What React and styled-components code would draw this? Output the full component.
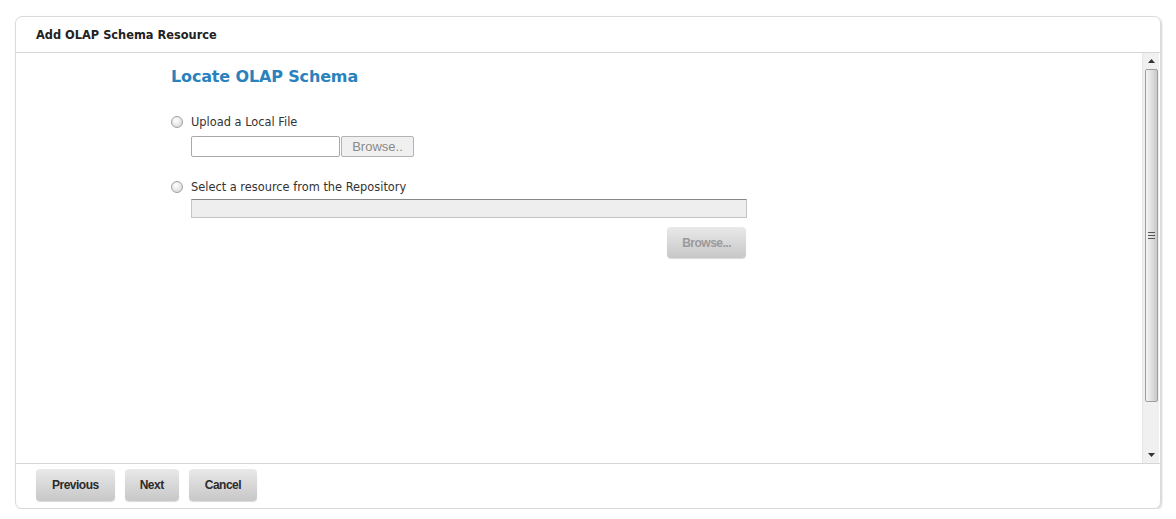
import React from "react";
import styled, { createGlobalStyle } from "styled-components";

const Global = createGlobalStyle`
  body {
    margin: 0;
    background: #fff;
    font-family: "DejaVu Sans", Verdana, sans-serif;
  }
`;

const Page = styled.div`
  padding: 16px 15px 0 15px;
`;

const Panel = styled.div`
  width: 1144px;
  height: 491px;
  border: 1px solid #dadada;
  border-radius: 7px;
  box-shadow: 1px 1px 2px rgba(0, 0, 0, 0.18);
  display: flex;
  flex-direction: column;
  overflow: hidden;
`;

const Header = styled.div`
  height: 35px;
  border-bottom: 1px solid #d6d6d6;
  display: flex;
  align-items: center;
  padding-left: 20px;
  font-size: 11.4px;
  font-weight: bold;
  color: #222;
`;

const Body = styled.div`
  flex: 1;
  display: flex;
  min-height: 0;
`;

const Content = styled.div`
  flex: 1;
  padding: 14px 0 0 155px;
`;

const Heading = styled.h2`
  margin: 0 0 29px 0;
  font-size: 16px;
  font-weight: bold;
  color: #2a82bd;
  letter-spacing: -0.15px;
`;

const Option = styled.div`
  margin-bottom: ${(p) => p.$gap}px;
`;

const RadioRow = styled.label`
  display: flex;
  align-items: center;
  gap: 8px;
  font-size: 11.4px;
  color: #333;
  height: 14px;
`;

const Radio = styled.span`
  width: 10px;
  height: 10px;
  border-radius: 50%;
  border: 1px solid #a0a0a0;
  background: radial-gradient(circle at 40% 35%, #fff 0%, #e6e6e6 55%, #cfcfcf 100%);
`;

const FileRow = styled.div`
  display: flex;
  margin: 7px 0 0 20px;
`;

const FileInput = styled.div`
  width: 147px;
  height: 19px;
  border: 1px solid #a9a9a9;
  border-radius: 2px;
  background: #fff;
`;

const SmallBrowse = styled.div`
  margin-left: 1px;
  width: 71px;
  height: 19px;
  border: 1px solid #b3b3b3;
  border-radius: 2px;
  background: #f0f0f0;
  color: #8a8a8a;
  font-family: "Liberation Sans", Arial, sans-serif;
  font-size: 13px;
  display: flex;
  align-items: center;
  justify-content: center;
`;

const RepoInput = styled.div`
  margin: 5px 0 0 20px;
  width: 554px;
  height: 17px;
  border: 1px solid #c4c4c4;
  border-top: 1px solid #888;
  background: #eeeeee;
`;

const RepoActions = styled.div`
  width: 575px;
  display: flex;
  justify-content: flex-end;
  margin-top: 9px;
`;

const GreyButton = styled.div`
  height: ${(p) => p.$h}px;
  padding: 0 ${(p) => p.$px}px;
  border-radius: 4px;
  background: linear-gradient(#e9e9e9, #c7c7c7);
  box-shadow: 0 1px 1px rgba(0, 0, 0, 0.15);
  display: flex;
  align-items: center;
  justify-content: center;
  font-family: "Liberation Sans", Arial, sans-serif;
  font-weight: bold;
  font-size: 12px;
  letter-spacing: -0.5px;
  color: ${(p) => (p.$disabled ? "#9a9a9a" : "#2b2b2b")};
`;

const Scrollbar = styled.div`
  width: 16px;
  margin-right: 1px;
  background: #f0f0f0;
  border-left: 1px solid #e6e6e6;
  display: flex;
  flex-direction: column;
  align-items: center;
`;

const Arrow = styled.div`
  height: 16px;
  width: 100%;
  display: flex;
  align-items: center;
  justify-content: center;
`;

const Thumb = styled.div`
  width: 13px;
  height: 333px;
  border: 1px solid #9d9d9d;
  border-radius: 2px;
  background: linear-gradient(90deg, #f4f4f4, #e2e2e2 45%, #c9c9c9);
  display: flex;
  align-items: center;
  justify-content: center;
  box-sizing: border-box;
`;

const Grip = styled.div`
  width: 7px;
  display: flex;
  flex-direction: column;
  gap: 2px;
  span {
    height: 1px;
    background: #555;
  }
`;

const Track = styled.div`
  flex: 1;
`;

const Footer = styled.div`
  box-sizing: border-box;
  height: 45px;
  flex-shrink: 0;
  border-top: 1px solid #d6d6d6;
  display: flex;
  align-items: flex-start;
  gap: 10px;
  padding: 5px 0 0 20px;
`;

const ArrowGlyph = ({ up }) => (
  <svg width="7" height="4" viewBox="0 0 7 4">
    <path d={up ? "M0 4 L3.5 0 L7 4 Z" : "M0 0 L3.5 4 L7 0 Z"} fill="#333" />
  </svg>
);

export default function App() {
  return (
    <>
      <Global />
      <Page>
        <Panel>
          <Header>Add OLAP Schema Resource</Header>
          <Body>
            <Content>
              <Heading>Locate OLAP Schema</Heading>
              <Option $gap={23}>
                <RadioRow>
                  <Radio />
                  Upload a Local File
                </RadioRow>
                <FileRow>
                  <FileInput />
                  <SmallBrowse>Browse..</SmallBrowse>
                </FileRow>
              </Option>
              <Option $gap={0}>
                <RadioRow>
                  <Radio />
                  Select a resource from the Repository
                </RadioRow>
                <RepoInput />
                <RepoActions>
                  <GreyButton $h={31} $px={15} $disabled>
                    Browse...
                  </GreyButton>
                </RepoActions>
              </Option>
            </Content>
            <Scrollbar>
              <Arrow>
                <ArrowGlyph up />
              </Arrow>
              <Thumb>
                <Grip>
                  <span />
                  <span />
                  <span />
                </Grip>
              </Thumb>
              <Track />
              <Arrow>
                <ArrowGlyph />
              </Arrow>
            </Scrollbar>
          </Body>
          <Footer>
            <GreyButton $h={32} $px={16}>Previous</GreyButton>
            <GreyButton $h={32} $px={15}>Next</GreyButton>
            <GreyButton $h={32} $px={16}>Cancel</GreyButton>
          </Footer>
        </Panel>
      </Page>
    </>
  );
}
